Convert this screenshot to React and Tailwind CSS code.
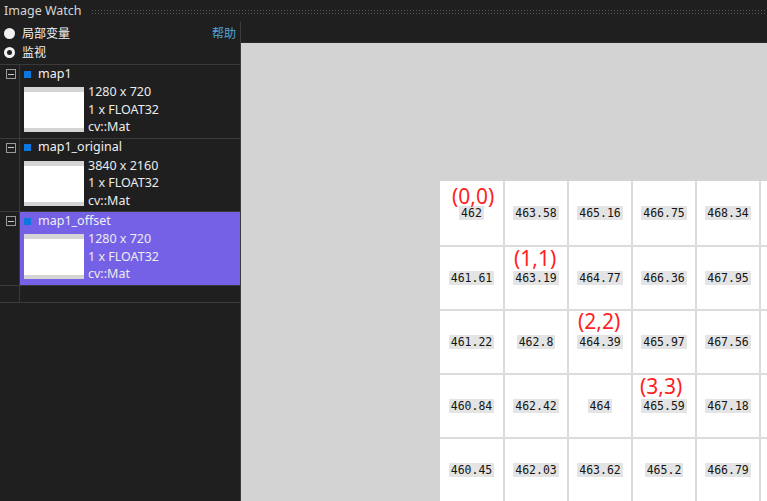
import React from "react";

const items = [
  { name: "map1", size: "1280 x 720", type: "1 x FLOAT32", cls: "cv::Mat" },
  { name: "map1_original", size: "3840 x 2160", type: "1 x FLOAT32", cls: "cv::Mat" },
  { name: "map1_offset", size: "1280 x 720", type: "1 x FLOAT32", cls: "cv::Mat", selected: true },
];

// last column is only a sliver at the right edge, its values are out of view
const values = [
  ["462", "463.58", "465.16", "466.75", "468.34", ""],
  ["461.61", "463.19", "464.77", "466.36", "467.95", ""],
  ["461.22", "462.8", "464.39", "465.97", "467.56", ""],
  ["460.84", "462.42", "464", "465.59", "467.18", ""],
  ["460.45", "462.03", "463.62", "465.2", "466.79", ""],
];

// where the red coordinate label sits inside its cell
const labelPos = [
  "left-[12px] top-[5px]",
  "left-[9px] top-[1px]",
  "left-[9px] top-[0px]",
  "left-[7px] top-[1px]",
];

const ui = { fontFamily: '"Noto Sans", "Noto Sans CJK SC", sans-serif' };

const Radio = ({ checked }) =>
  checked ? (
    <span className="w-[11px] h-[11px] rounded-full border-[3px] border-[#f2f2f2] bg-[#1f1f1f]" />
  ) : (
    <span className="w-[11px] h-[11px] rounded-full bg-[#f2f2f2]" />
  );

const WatchItem = ({ item }) => (
  <div className="flex border-b border-[#3a3a3a]">
    <div className="w-[20px] shrink-0 border-r border-[#3a3a3a] pl-[6px] pt-[4px]">
      <div className="w-[10px] h-[10px] border border-[#9a9a9a] flex items-center justify-center">
        <div className="w-[6px] h-px bg-[#c8c8c8]" />
      </div>
    </div>
    <div className={`flex-1 pl-[4px] pb-[2px] ${item.selected ? "bg-[#7461e6]" : ""}`}>
      <div className="h-[18px] flex items-center gap-[7px]">
        <span className="w-[7px] h-[7px] bg-[#0a78e0]" />
        <span className="text-[12.5px] text-[#f0f0f0]">{item.name}</span>
      </div>
      <div className="flex gap-[4px]">
        <div className="w-[60px] h-[45px] mt-[4px] bg-white border-t-[5px] border-b-[4px] border-[#d4d4d4]" />
        <div className="text-[12.5px] leading-[17.5px] text-[#ececec]">
          <div>{item.size}</div>
          <div>{item.type}</div>
          <div>{item.cls}</div>
        </div>
      </div>
    </div>
  </div>
);

export default function App() {
  return (
    <div className="w-[767px] h-[501px] flex flex-col bg-[#1f1f1f] overflow-hidden" style={ui}>
      {/* title bar */}
      <div className="h-[22px] flex items-center pl-[4px] gap-[9px] shrink-0">
        <span className="text-[12.5px] text-[#d6d6d6]">Image Watch</span>
        <div className="flex-1 h-[5px] bg-[radial-gradient(circle,#5a5a5a_0.8px,transparent_1px)] bg-[length:3px_3px]" />
      </div>

      <div className="flex flex-1 min-h-0">
        {/* left panel */}
        <div className="w-[241px] shrink-0 border-r border-[#3c3c3c] flex flex-col">
          <div className="pt-[2px] pb-[2px] border-b border-[#3a3a3a]">
            <div className="h-[19px] flex items-center pl-[4px] pr-[4px]">
              <Radio />
              <span className="ml-[7px] text-[12px] text-[#f2f2f2]">局部变量</span>
              <span className="ml-auto text-[12px] text-[#4fa6de]">帮助</span>
            </div>
            <div className="h-[19px] flex items-center pl-[4px]">
              <Radio checked />
              <span className="ml-[7px] text-[12px] text-[#f2f2f2]">监视</span>
            </div>
          </div>
          {items.map((it) => (
            <WatchItem key={it.name} item={it} />
          ))}
          <div className="flex h-[17px] border-b border-[#3a3a3a]">
            <div className="w-[20px] border-r border-[#3a3a3a]" />
          </div>
        </div>

        {/* image view */}
        <div className="flex-1 flex flex-col min-w-0">
          <div className="h-[21px] shrink-0 border-b border-[#2b2b2b]" />
          <div className="flex-1 bg-[#d3d3d3] overflow-hidden pl-[199px] pt-[138px]">
            <div className="grid grid-cols-[63px_62px_62px_62px_62px_62px] grid-rows-[64px_62px_62px_62px_62px] gap-[2px] bg-[#dcdcdc] w-max">
              {values.map((row, r) =>
                row.map((v, c) => (
                  <div key={`${r}-${c}`} className="relative bg-white flex items-center justify-center">
                    {v && (
                      <span
                        className="bg-[#e4e4e4] px-[2px] text-[11.5px] leading-[14px] text-[#151515]"
                        style={{ fontFamily: '"DejaVu Sans Mono", monospace' }}
                      >
                        {v}
                      </span>
                    )}
                    {r === c && r < 4 && (
                      <span className={`absolute ${labelPos[r]} text-[21px] leading-none text-[#ff1f1f]`}>
                        ({r},{c})
                      </span>
                    )}
                  </div>
                ))
              )}
            </div>
          </div>
        </div>
      </div>
    </div>
  );
}
